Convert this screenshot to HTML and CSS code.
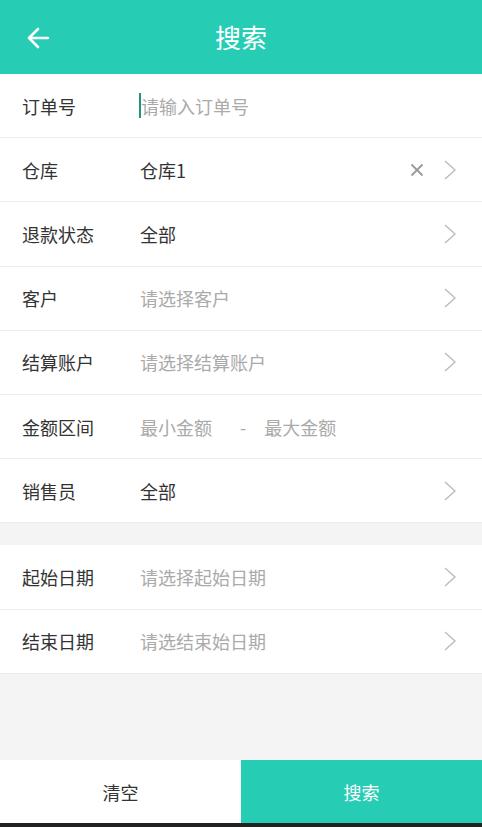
FILE: index.html
```html
<!DOCTYPE html>
<html lang="zh">
<head>
    <meta charset="UTF-8">
    <meta name="viewport" content="width=device-width, initial-scale=1.0">
    <title>搜索</title>
    <link rel="stylesheet" href="styles.css">
</head>
<body>
    <div class="page">
        <div class="header">
            <svg class="back" width="24" height="22" viewBox="0 0 24 22"><path d="M22 11H3M12 2L3 11l9 9" fill="none" stroke="#fff" stroke-width="2.6" stroke-linecap="round" stroke-linejoin="round"/></svg>
            <span class="title">搜索</span>
        </div>

        <div class="group">
            <div class="row">
                <span class="label">订单号</span>
                <span class="value placeholder"><i class="cursor"></i>请输入订单号</span>
            </div>
            <div class="row">
                <span class="label">仓库</span>
                <span class="value">仓库1</span>
                <svg class="clear" width="14" height="14" viewBox="0 0 14 14"><path d="M1.5 1.5l11 11M12.5 1.5l-11 11" stroke="#999" stroke-width="1.8"/></svg>
                <svg class="arrow" width="12" height="20" viewBox="0 0 12 20"><path d="M1 1l10 9-10 9" fill="none" stroke="#bbb" stroke-width="1.4"/></svg>
            </div>
            <div class="row">
                <span class="label">退款状态</span>
                <span class="value">全部</span>
                <svg class="arrow" width="12" height="20" viewBox="0 0 12 20"><path d="M1 1l10 9-10 9" fill="none" stroke="#bbb" stroke-width="1.4"/></svg>
            </div>
            <div class="row">
                <span class="label">客户</span>
                <span class="value placeholder">请选择客户</span>
                <svg class="arrow" width="12" height="20" viewBox="0 0 12 20"><path d="M1 1l10 9-10 9" fill="none" stroke="#bbb" stroke-width="1.4"/></svg>
            </div>
            <div class="row">
                <span class="label">结算账户</span>
                <span class="value placeholder">请选择结算账户</span>
                <svg class="arrow" width="12" height="20" viewBox="0 0 12 20"><path d="M1 1l10 9-10 9" fill="none" stroke="#bbb" stroke-width="1.4"/></svg>
            </div>
            <div class="row">
                <span class="label">金额区间</span>
                <span class="range placeholder">
                    <span>最小金额</span>
                    <span class="dash">-</span>
                    <span>最大金额</span>
                </span>
            </div>
            <div class="row">
                <span class="label">销售员</span>
                <span class="value">全部</span>
                <svg class="arrow" width="12" height="20" viewBox="0 0 12 20"><path d="M1 1l10 9-10 9" fill="none" stroke="#bbb" stroke-width="1.4"/></svg>
            </div>
        </div>

        <div class="group gap">
            <div class="row">
                <span class="label">起始日期</span>
                <span class="value placeholder">请选择起始日期</span>
                <svg class="arrow" width="12" height="20" viewBox="0 0 12 20"><path d="M1 1l10 9-10 9" fill="none" stroke="#bbb" stroke-width="1.4"/></svg>
            </div>
            <div class="row">
                <span class="label">结束日期</span>
                <span class="value placeholder">请选结束始日期</span>
                <svg class="arrow" width="12" height="20" viewBox="0 0 12 20"><path d="M1 1l10 9-10 9" fill="none" stroke="#bbb" stroke-width="1.4"/></svg>
            </div>
        </div>

        <div class="spacer"></div>

        <div class="footer">
            <button class="btn clear-btn">清空</button>
            <button class="btn search-btn">搜索</button>
        </div>
        <div class="navbar-bottom"></div>
    </div>
</body>
</html>
```

FILE: styles.css
```css
body { margin: 0; font-family: "Noto Sans CJK SC", "Noto Sans", sans-serif; background: #f4f4f4; }
.page { height: 827px; display: flex; flex-direction: column; }
.header { height: 74px; flex: none; background: #26cdb4; display: flex; align-items: center; justify-content: center; position: relative; }
.header .back { position: absolute; left: 26px; top: 27px; }
.header .title { color: white; font-size: 26px; margin-top: -2px; }
.group { background: white; }
.group.gap { margin-top: 22px; }
.row { height: 64.2px; box-sizing: border-box; border-bottom: 1px solid #ececec; display: flex; align-items: center; padding: 0 26px 0 22px; font-size: 18px; color: #333; }
.row .label { width: 118px; flex: none; }
.row .value { flex: 1; display: flex; align-items: center; }
.placeholder { color: #aaa; }
.cursor { display: inline-block; width: 2px; height: 25px; background: #1f9480; margin-left: -1px; }
.row .clear { margin-right: 20px; }
.range { display: flex; }
.range .dash { margin: 0 18px 0 28px; }
.spacer { flex: 1; }
.footer { height: 63px; flex: none; display: flex; }
.btn { flex: 1; border: none; font-family: inherit; font-size: 18px; margin: 0; padding: 0; }
.clear-btn { background: white; color: #333; }
.search-btn { background: #26cdb4; color: white; }
.navbar-bottom { height: 4px; flex: none; background: #222; }
```
